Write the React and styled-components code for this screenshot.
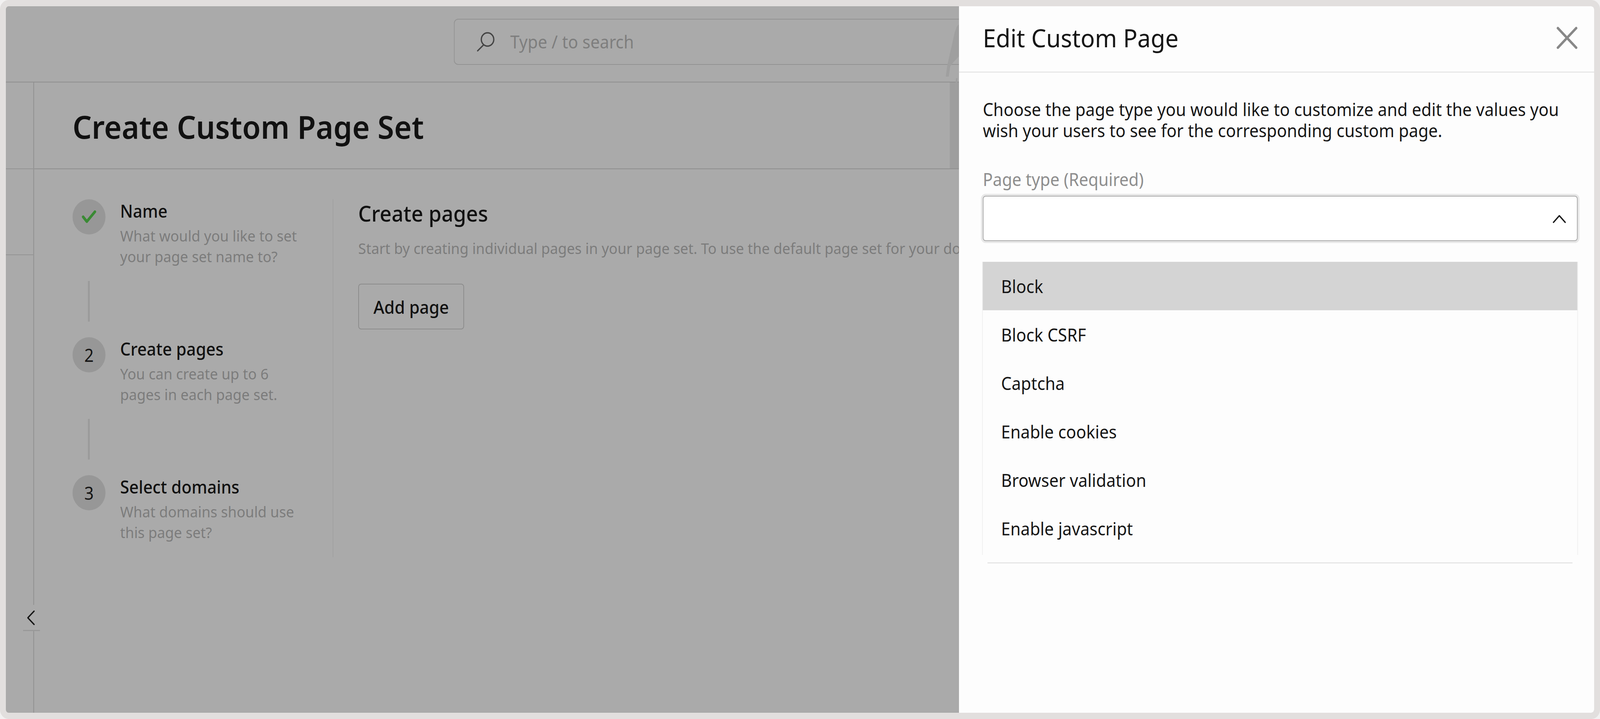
import React, { useLayoutEffect, useState } from "react";
import styled, { createGlobalStyle } from "styled-components";

const Global = createGlobalStyle`
  html, body { margin: 0; padding: 0; background: #f2f1f1; overflow: hidden; }
  body { font-family: "Noto Sans", "Open Sans", sans-serif; color: #111; }
  * { box-sizing: border-box; }
`;

const Frame = styled.div`
  position: relative; width: 4368px; height: 1840px; border: 16px solid #e2dfde; border-radius: 24px;
  background: #aaaaaa; overflow: hidden; display: flex; flex-direction: column; transform-origin: 0 0;
`;
const TopBar = styled.header`
  flex: none; height: 195px; border-bottom: 2px solid #8f8f8f; padding: 32px 0 0 1223px; display: flex; align-items: flex-start;
`;
const SearchBox = styled.div`
  flex: none; width: 1379px; height: 118px; border: 2px solid #939393; border-right: 0; border-radius: 12px 0 0 12px;
  display: flex; align-items: center; padding-left: 58px; gap: 42px;
`;
const SearchText = styled.span`
  font-size: 45.4px; color: #7e7e7e; margin-top: -2px;
`;
const Main = styled.div`
  flex: 1; display: flex; min-height: 0;
`;
const Sidebar = styled.nav`
  position: relative; flex: none; width: 77px; border-right: 2px solid #8f8f8f;
`;
const SideBlock = styled.div`
  height: ${p => p.$h}px; border-bottom: 2px solid #949494;
`;
const Collapse = styled.button`
  position: absolute; left: 47px; top: 1337px; width: 46px; height: 67px; padding: 0; background: #aaaaaa; border: 0;
  border-bottom: 3px solid #999; display: flex; align-items: center; justify-content: center;
  svg { margin-right: 3px; margin-top: 2px; }
`;
const Content = styled.div`
  position: relative; flex: none; width: 2525px; display: flex; flex-direction: column; overflow: hidden;
`;
const PageHead = styled.div`
  flex: none; height: 222px; border-bottom: 2px solid #8f8f8f; padding: 5px 0 0 105px; display: flex; align-items: center;
`;
const PageTitle = styled.h1`
  margin: 0; font-size: 82px; font-weight: 600; line-height: 1.2; color: #111;
`;
const Wizard = styled.div`
  display: flex; padding: 77px 0 0 105px;
`;
const Steps = styled.ol`
  list-style: none; margin: 0; padding: 0; flex: none; width: 712px; height: 916px; border-right: 2px solid #a1a1a1;
`;
const Step = styled.li`
  display: flex; gap: 40px; height: 209px;
`;
const Bullet = styled.div`
  flex: none; width: 90px; height: 90px; border-radius: 50%; background: #979797; display: flex; align-items: center; justify-content: center;
  font-size: 45px; color: #151515;
`;
const StepText = styled.div`
  padding-top: 3px; width: 520px;
`;
const StepTitle = styled.div`
  font-size: 45px; line-height: 54px; font-weight: 500; color: #111;
`;
const StepDesc = styled.div`
  margin-top: 9px; font-size: 39px; line-height: 53px; color: #7c7c7c;
`;
const Connector = styled.div`
  width: 5px; height: 104px; margin: 0 0 40px 42px; background: #9a9a9a;
`;
const Pane = styled.section`
  flex: 1; min-width: 0; padding: 0 0 0 68px;
`;
const PaneTitle = styled.h2`
  margin: 0; font-size: 56.5px; font-weight: 500; line-height: 72px; color: #111;
`;
const PaneText = styled.p`
  margin: 26px 0 0; font-size: 39px; line-height: 53px; color: #7c7c7c; white-space: nowrap; overflow: hidden;
`;
const AddButton = styled.button`
  margin-top: 65px; width: 289px; height: 117px; border: 2px solid #8c8c8c; border-radius: 8px; background: transparent;
  font: 500 45.4px "Noto Sans", sans-serif; color: #111;
`;
const Thumb = styled.div`
  position: absolute; right: 0; top: 0; width: 25px; height: 220px; background: #9e9e9e;
`;
const Streak = styled.svg`
  position: absolute; left: 2560px; top: 34px; width: 42px; height: 180px;
`;
const Drawer = styled.aside`
  position: absolute; top: 0; bottom: 0; right: 0; width: 1734px; background: #fdfdfd; border-radius: 0 6px 6px 0;
  display: flex; flex-direction: column;
`;
const DrawerHead = styled.div`
  flex: none; height: 170px; border-bottom: 3px solid #e8e8e8; padding: 0 45px 0 65px; display: flex; align-items: center; justify-content: space-between;
`;
const DrawerTitle = styled.h2`
  margin: 0 0 8px; font-size: 64.5px; font-weight: 400; color: #161616;
`;
const CloseBtn = styled.button`
  border: 0; background: none; padding: 0; display: flex; margin-bottom: 6px;
`;
const DrawerBody = styled.div`
  padding: 67px 45px 0 65px;
`;
const Intro = styled.p`
  margin: 0; font-size: 45.4px; line-height: 53.5px; color: #161616;
`;
const Label = styled.div`
  margin-top: 72px; font-size: 45px; line-height: 54px; color: #8e8e8e;
`;
const Field = styled.div`
  position: relative; margin-top: 15px;
`;
const Select = styled.div`
  height: 116px; border: 2px solid #a8a8a8; border-radius: 8px; box-shadow: 0 0 0 5px #e8e8e8; background: #fff;
  display: flex; align-items: center; justify-content: flex-end; padding-right: 30px;
  svg { margin-top: 2px; }
`;
const Helper = styled.div`
  margin-top: 22px; height: 26px; overflow: hidden; font-size: 39px; line-height: 53px; color: #8e8e8e; white-space: nowrap;
`;
const Menu = styled.div`
  position: absolute; top: 142px; left: -2px; right: -1px; padding-top: 27px; background: #fdfdfd;
`;
const MenuList = styled.ul`
  list-style: none; margin: 0; padding: 0 0 6px; border-left: 2px solid #f0f0f0; border-right: 2px solid #f0f0f0;
`;
const MenuItem = styled.li`
  height: 124px; padding-left: 50px; display: flex; align-items: center; font-size: 45.4px; color: #161616;
  background: ${p => (p.$active ? "#d4d4d4" : "transparent")};
`;
const MenuFoot = styled.div`
  margin: 19px 15px 0; height: 3px; background: #e6e6e6;
`;
const Check = styled.svg`
  width: 44px; height: 36px;
`;

const steps = [
  { n: 1, title: "Name", desc: "What would you like to set your page set name to?", done: true },
  { n: 2, title: "Create pages", desc: "You can create up to 6 pages in each page set." },
  { n: 3, title: "Select domains", desc: "What domains should use this page set?" },
];
const options = ["Block", "Block CSRF", "Captcha", "Enable cookies", "Browser validation", "Enable javascript"];

export default function App() {
  const [fit, setFit] = useState(1);
  useLayoutEffect(() => {
    setFit(window.innerWidth / 4368);
  }, []);
  return (
    <>
      <Global />
      <Frame style={{ transform: `scaleX(${fit})` }}>
        <TopBar>
          <SearchBox>
            <svg width="52" height="50" viewBox="0 0 52 50" fill="none" stroke="#444" strokeWidth="3.5" strokeLinecap="round">
              <circle cx="32" cy="19" r="17" />
              <path d="M21 33 L5 48" />
            </svg>
            <SearchText>Type / to search</SearchText>
          </SearchBox>
        </TopBar>
        <Main>
          <Sidebar>
            <SideBlock $h={222} />
            <SideBlock $h={220} />
            <Collapse aria-label="Collapse">
              <svg width="22" height="38" viewBox="0 0 22 38" fill="none" stroke="#151515" strokeWidth="3.5" strokeLinecap="round" strokeLinejoin="round">
                <path d="M19 2 L2 19 L19 36" />
              </svg>
            </Collapse>
          </Sidebar>
          <Content>
            <PageHead>
              <PageTitle>Create Custom Page Set</PageTitle>
            </PageHead>
            <Wizard>
              <Steps>
                {steps.map((s, i) => (
                  <React.Fragment key={s.n}>
                    <Step>
                      <Bullet>
                        {s.done ? (
                          <Check viewBox="0 0 44 36" fill="none" stroke="#3a8a34" strokeWidth="7" strokeLinecap="round" strokeLinejoin="round">
                            <path d="M6 18 L16 30 L38 5" />
                          </Check>
                        ) : (
                          s.n
                        )}
                      </Bullet>
                      <StepText>
                        <StepTitle>{s.title}</StepTitle>
                        <StepDesc>{s.desc}</StepDesc>
                      </StepText>
                    </Step>
                    {i < steps.length - 1 && <Connector />}
                  </React.Fragment>
                ))}
              </Steps>
              <Pane>
                <PaneTitle>Create pages</PaneTitle>
                <PaneText>Start by creating individual pages in your page set. To use the default page set for your domains</PaneText>
                <AddButton>Add page</AddButton>
              </Pane>
            </Wizard>
            <Thumb />
          </Content>
        </Main>
        <Streak viewBox="0 0 42 180">
          <path d="M42 12 L36 18 L30 34 L24 60 L18 84 L10 118 L6 146 L14 146 L18 120 L26 110 L42 94 Z" fill="#9f9f9f" />
          <path d="M34 150 L30 180 L36 180 L38 150 Z" fill="#9f9f9f" />
        </Streak>
        <Drawer>
          <DrawerHead>
            <DrawerTitle>Edit Custom Page</DrawerTitle>
            <CloseBtn aria-label="Close">
              <svg width="58" height="58" viewBox="0 0 58 58" fill="none" stroke="#888" strokeWidth="6.5" strokeLinecap="round">
                <path d="M4 4 L54 54 M54 4 L4 54" />
              </svg>
            </CloseBtn>
          </DrawerHead>
          <DrawerBody>
            <Intro>Choose the page type you would like to customize and edit the values you wish your users to see for the corresponding custom page.</Intro>
            <Label>Page type (Required)</Label>
            <Field>
              <Select>
                <svg width="36" height="22" viewBox="0 0 36 22" fill="none" stroke="#1a1a1a" strokeWidth="3.5" strokeLinecap="round" strokeLinejoin="round">
                  <path d="M2 20 L18 3 L34 20" />
                </svg>
              </Select>
              <Helper>Select which page you would like to customize</Helper>
              <Menu>
                <MenuList>
                  {options.map((o, i) => (
                    <MenuItem key={o} $active={i === 0}>{o}</MenuItem>
                  ))}
                </MenuList>
                <MenuFoot />
              </Menu>
            </Field>
          </DrawerBody>
        </Drawer>
      </Frame>
    </>
  );
}
